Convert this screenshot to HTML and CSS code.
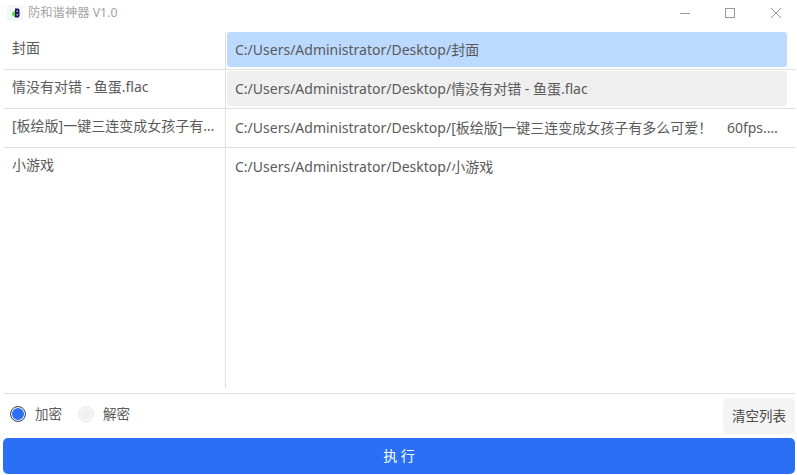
FILE: index.html
```html
<!DOCTYPE html>
<html lang="zh">
<head>
<meta charset="utf-8">
<title>防和谐神器 V1.0</title>
<link rel="stylesheet" href="styles.css">
</head>
<body>
<div class="app">
  <header class="titlebar">
    <div class="app-icon">
      <svg width="16" height="16" viewBox="0 0 16 16"><rect width="16" height="16" fill="#f2f7f7"/><path d="M8 3.500h3.500l1 1.500v6l-1 1.500h-3.500z" fill="#1d1464"/><path d="M5 8l3-2.500v6.500l-1.500-.5-1.500-1.500z" fill="#5fdc3c"/><rect x="9.500" y="5.500" width="1.500" height="1.500" fill="#c9b8ee"/><rect x="9.500" y="9" width="1.500" height="1.500" fill="#c9b8ee"/></svg>
    </div>
    <span class="app-title">防和谐神器 V1.0</span>
    <div class="win-buttons">
      <svg class="win-btn" width="46" height="24" viewBox="0 0 46 24"><path d="M21 12.500h10" stroke="#999" fill="none"/></svg>
      <svg class="win-btn" width="46" height="24" viewBox="0 0 46 24"><rect x="20.500" y="7.500" width="9" height="9" stroke="#999" fill="none"/></svg>
      <svg class="win-btn" width="46" height="24" viewBox="0 0 46 24"><path d="M20 7l10 10M30 7l-10 10" stroke="#999" fill="none"/></svg>
    </div>
  </header>
  <main class="lists">
    <ul class="names">
      <li class="name">封面</li>
      <li class="name">情没有对错 - 鱼蛋.flac</li>
      <li class="name">[板绘版]一键三连变成女孩子有多么可爱！ 60fps.mp4</li>
      <li class="name">小游戏</li>
    </ul>
    <ul class="paths">
      <li class="path selected"><span class="path-text">C:/Users/Administrator/Desktop/封面</span></li>
      <li class="path hovered"><span class="path-text">C:/Users/Administrator/Desktop/情没有对错 - 鱼蛋.flac</span></li>
      <li class="path"><span class="path-text">C:/Users/Administrator/Desktop/[板绘版]一键三连变成女孩子有多么可爱！    60fps.mp4</span></li>
      <li class="path"><span class="path-text">C:/Users/Administrator/Desktop/小游戏</span></li>
    </ul>
  </main>
  <section class="options">
    <div class="radio-group">
      <span class="radio on"></span><span class="radio-label">加密</span>
      <span class="radio off"></span><span class="radio-label">解密</span>
    </div>
    <button class="clear-btn">清空列表</button>
  </section>
  <button class="run-btn">执 行</button>
</div>
</body>
</html>
```
FILE: styles.css
```css
* { box-sizing: border-box; }
html, body { margin: 0; height: 100%; background: #fff; }
body {
  font-family: "Noto Sans", "Noto Sans CJK SC", sans-serif;
  font-size: 14px;
  color: #5a5a5a;
  overflow: hidden;
}
.app {
  width: 797px;
  height: 475px;
  display: flex;
  flex-direction: column;
  padding: 0 2px 1px 3px;
}
.titlebar {
  height: 32px;
  flex: none;
  display: flex;
  align-items: center;
  padding: 0 0 7px 4px;
  margin-right: -2px;
}
.app-icon { width: 16px; height: 16px; line-height: 0; }
.app-title { margin: 1px 0 0 5px; font-size: 12.3px; color: #a3a3a3; line-height: 16px; }
.win-buttons { margin-left: auto; display: flex; }
.win-btn { display: block; }
.lists { flex: none; height: 356px; display: flex; }
ul { list-style: none; margin: 0; padding: 0; }
.names { width: 223px; flex: none; border-right: 1px solid #e0e0e0; }
.name {
  height: 39px;
  padding: 7px 9px 0;
  line-height: 20px;
  border-bottom: 1px solid #e0e0e0;
  white-space: nowrap;
  overflow: hidden;
  text-overflow: ellipsis;
}
.name:last-child { border-bottom: none; }
.name:first-child { height: 38px; padding-top: 6px; }
.paths { flex: 1; min-width: 0; }
.path {
  height: 39px;
  padding: 1px 0 0;
  border-bottom: 1px solid #e0e0e0;
}
.path:first-child { height: 38px; padding-top: 0; }
.path:last-child { border-bottom: none; }
.path-text {
  display: block;
  height: 35px;
  padding: 0 8px;
  margin: 0 8px 0 1px;
  border-radius: 3px;
  line-height: 36px;
  white-space: pre;
  overflow: hidden;
  text-overflow: ellipsis;
}
.selected .path-text { background: #bcd9ff; }
.hovered .path-text { background: #efefef; }
.options {
  flex: none;
  height: 45px;
  margin-top: 5px;
  border-top: 1px solid #e0e0e0;
  display: flex;
  align-items: flex-start;
  justify-content: space-between;
}
.radio-group { display: flex; align-items: center; height: 40px; padding-left: 7px; }
.radio { width: 16px; height: 16px; border-radius: 50%; flex: none; }
.radio.on { background: #2a6ff4; border: 1px solid #555; box-shadow: inset 0 0 0 1px #fff; }
.radio.off { background: #f0f0f0; border: 1px solid #e6e6e6; box-shadow: inset 0 0 0 1px #fff; margin-left: 16px; }
.radio-label { margin-left: 9px; line-height: 16px; font-size: 13.5px; }
.clear-btn {
  width: 72px;
  height: 36px;
  margin-top: 4px;
  border: none;
  border-radius: 5px;
  background: #f4f4f4;
  color: #4a4a4a;
  font: inherit;
  font-size: 13.5px;
  padding: 0 0 3px;
}
.run-btn {
  flex: none;
  height: 36px;
  border: none;
  border-radius: 5px;
  background: #2a6ff4;
  color: #fff;
  font: inherit;
  padding: 0 0 2px;
}
```
